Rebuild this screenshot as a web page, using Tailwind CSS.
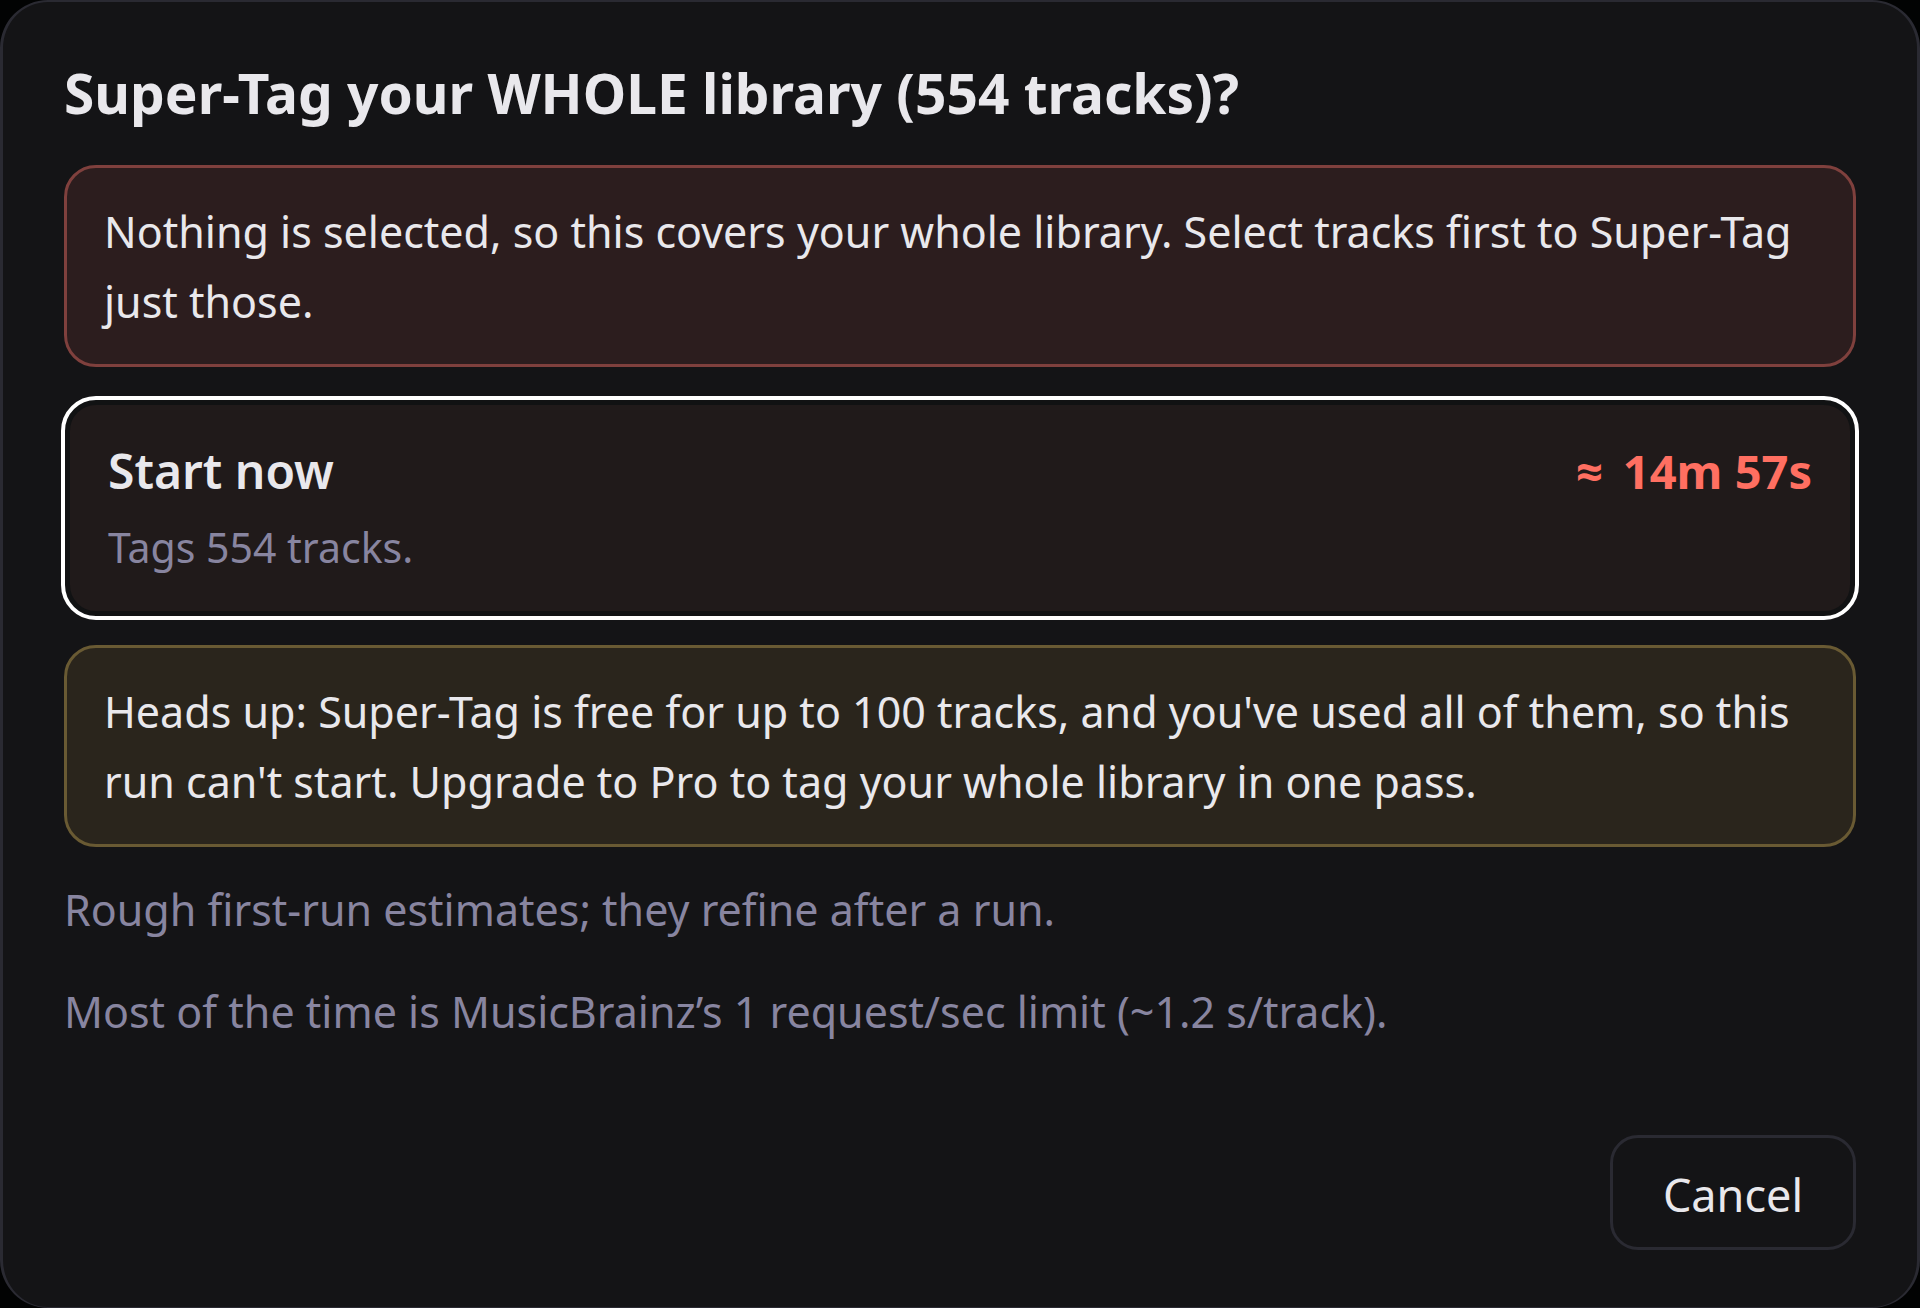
<!DOCTYPE html>
<html lang="en">
<head>
    <meta charset="UTF-8">
    <meta name="viewport" content="width=device-width, initial-scale=1.0">
    <title>Super-Tag</title>
    <script src="https://cdn.jsdelivr.net/npm/@tailwindcss/browser@4"></script>
</head>
<body class="bg-[#020303] font-['Noto_Sans','Open_Sans',sans-serif] text-[#e9e8ec]">
    <div role="dialog" aria-labelledby="dialogTitle" class="flex flex-col min-h-screen bg-[#141416] border-x-3 border-t-2 border-b border-[#2a2a32] rounded-[48px] px-[61px] pt-14 pb-[57px]">
        <h1 id="dialogTitle" class="text-[55px] leading-[70px] font-bold">Super-Tag your WHOLE library (554 tracks)?</h1>

        <!-- Scope warning -->
        <p class="mt-[37px] px-[37px] pt-[29px] pb-[27px] border-3 border-[#7f403d] rounded-[32px] bg-[#2c1d1e] text-[43px] leading-[70px]">Nothing is selected, so this covers your whole library. Select tracks first to Super-Tag just those.</p>

        <!-- Start option, shown focused -->
        <button type="button" class="mt-8 px-[38px] pt-8 pb-[30px] border-6 border-[#111213] rounded-[32px] bg-[#201a1a] outline-4 -outline-offset-1 outline-white text-left">
            <span class="flex items-baseline justify-between">
                <span class="text-[48px] leading-[68px] font-semibold">Start now</span>
                <span class="flex items-baseline gap-5 text-[47px] leading-[68px] font-bold text-[#ff6f61]"><span>≈</span><span>14m 57s</span></span>
            </span>
            <span class="block pt-2 text-[41px] leading-[68px] text-[#8885a0]">Tags 554 tracks.</span>
        </button>

        <!-- Free limit notice -->
        <p class="mt-7 px-[37px] pt-[29px] pb-[27px] border-3 border-[#695a33] rounded-[32px] bg-[#2a251c] text-[43px] leading-[70px]">Heads up: Super-Tag is free for up to 100 tracks, and you've used all of them, so this run can't start. Upgrade to Pro to tag your whole library in one pass.</p>

        <p class="mt-7 text-[43px] leading-[70px] text-[#8885a0]">Rough first-run estimates; they refine after a run.</p>
        <p class="mt-8 text-[43px] leading-[70px] text-[#8885a0]">Most of the time is MusicBrainz’s 1 request/sec limit (~1.2 s/track).</p>

        <div class="mt-auto flex justify-end">
            <button type="button" class="px-[50px] pt-[26px] pb-[22px] border-3 border-[#2a2a32] rounded-[28px] text-[45px] leading-[61px]">Cancel</button>
        </div>
    </div>
</body>
</html>
